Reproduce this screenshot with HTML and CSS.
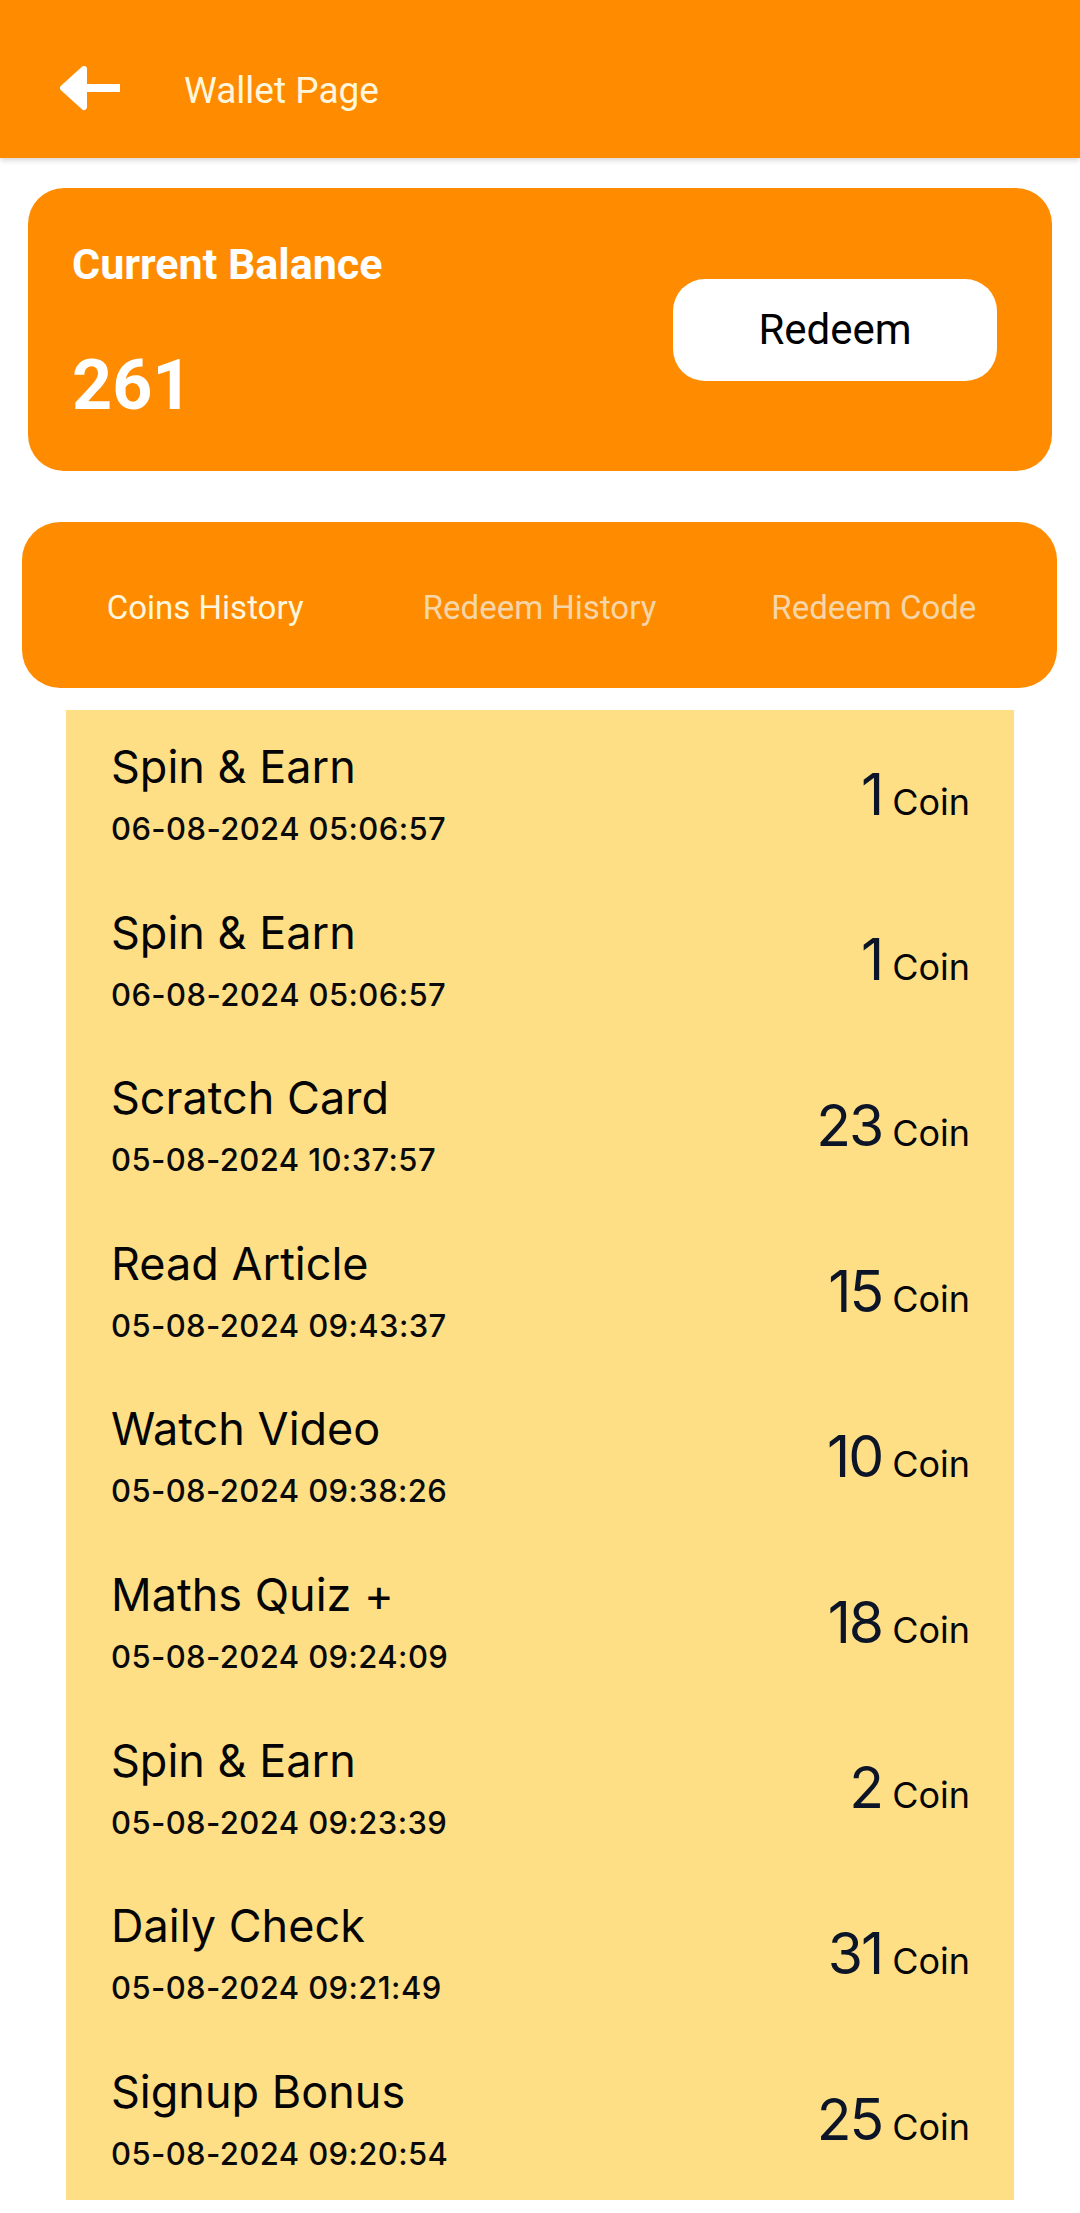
FILE: index.html
```html
<!DOCTYPE html>
<html>
<head>
<meta charset="utf-8">
<link rel="stylesheet" href="styles.css">
</head>
<body>
<header class="appbar">
  <svg class="back" width="80" height="60" viewBox="40 56 80 60">
    <path d="M84 67 L63 86 L84 105 Z" fill="#fff" stroke="#fff" stroke-width="6" stroke-linejoin="round"/>
    <line x1="84" y1="86" x2="119" y2="86" stroke="#fff" stroke-width="8" stroke-linecap="round"/>
  </svg>
  <h1 class="appbar-title">Wallet Page</h1>
</header>

<section class="balance-card">
  <div class="balance-info">
    <div class="balance-label">Current Balance</div>
    <div class="balance-value">261</div>
  </div>
  <button class="redeem-btn">Redeem</button>
</section>

<nav class="tabs">
  <div class="tab active">Coins History</div>
  <div class="tab">Redeem History</div>
  <div class="tab">Redeem Code</div>
</nav>

<ul class="history">
  <li class="row"><div class="info"><div class="title">Spin &amp; Earn</div><div class="date">06-08-2024 05:06:57</div></div><div class="amount"><span class="num">1</span><span class="unit">Coin</span></div></li>
  <li class="row"><div class="info"><div class="title">Spin &amp; Earn</div><div class="date">06-08-2024 05:06:57</div></div><div class="amount"><span class="num">1</span><span class="unit">Coin</span></div></li>
  <li class="row"><div class="info"><div class="title">Scratch Card</div><div class="date">05-08-2024 10:37:57</div></div><div class="amount"><span class="num">23</span><span class="unit">Coin</span></div></li>
  <li class="row"><div class="info"><div class="title">Read Article</div><div class="date">05-08-2024 09:43:37</div></div><div class="amount"><span class="num">15</span><span class="unit">Coin</span></div></li>
  <li class="row"><div class="info"><div class="title">Watch Video</div><div class="date">05-08-2024 09:38:26</div></div><div class="amount"><span class="num">10</span><span class="unit">Coin</span></div></li>
  <li class="row"><div class="info"><div class="title">Maths Quiz +</div><div class="date">05-08-2024 09:24:09</div></div><div class="amount"><span class="num">18</span><span class="unit">Coin</span></div></li>
  <li class="row"><div class="info"><div class="title">Spin &amp; Earn</div><div class="date">05-08-2024 09:23:39</div></div><div class="amount"><span class="num">2</span><span class="unit">Coin</span></div></li>
  <li class="row"><div class="info"><div class="title">Daily Check</div><div class="date">05-08-2024 09:21:49</div></div><div class="amount"><span class="num">31</span><span class="unit">Coin</span></div></li>
  <li class="row"><div class="info"><div class="title">Signup Bonus</div><div class="date">05-08-2024 09:20:54</div></div><div class="amount"><span class="num">25</span><span class="unit">Coin</span></div></li>
</ul>
</body>
</html>
```

FILE: styles.css
```css
* { box-sizing: border-box; }
html, body {
  margin: 0;
  padding: 0;
  background: #ffffff;
}
body {
  width: 1080px;
  height: 2213px;
  overflow: hidden;
  font-family: Roboto, "Liberation Sans", sans-serif;
}

.appbar {
  height: 158px;
  background: #ff8c00;
  display: flex;
  align-items: center;
  padding-top: 18px;
  padding-left: 40px;
  box-shadow: 0 2px 6px rgba(0, 0, 0, 0.18);
  position: relative;
  z-index: 1;
}
.back {
  display: block;
  flex: none;
}
.appbar-title {
  margin: 6px 0 0 64px;
  font-size: 37px;
  font-weight: 400;
  color: #fff6de;
  line-height: 44px;
}

.balance-card {
  margin: 30px 28px 0 28px;
  height: 283px;
  background: #ff8c00;
  border-radius: 36px;
  display: flex;
  align-items: center;
  justify-content: space-between;
  padding: 0 55px 0 44px;
}
.balance-info {
  display: flex;
  flex-direction: column;
  padding-top: 4px;
}
.balance-label {
  font-size: 43px;
  font-weight: 700;
  line-height: 50px;
  color: #ffffff;
}
.balance-value {
  margin-top: 56px;
  font-size: 70px;
  font-weight: 700;
  line-height: 80px;
  color: #ffffff;
}
.redeem-btn {
  width: 324px;
  height: 102px;
  border: none;
  border-radius: 32px;
  background: #ffffff;
  font-family: Roboto, "Liberation Sans", sans-serif;
  font-size: 42px;
  color: #000000;
  padding: 0;
}

.tabs {
  margin: 51px 23px 0 22px;
  height: 166px;
  background: #ff8c00;
  border-radius: 38px;
  display: flex;
  align-items: center;
  padding: 4px 16px 0 16px;
}
.tab {
  flex: 1;
  text-align: center;
  font-size: 33px;
  color: #f6d6a9;
}
.tab.active {
  color: #fff6de;
}

.history {
  list-style: none;
  margin: 22px 66px 0 66px;
  padding: 0;
  background: #fedf85;
}
.row {
  height: 165.6px;
  display: flex;
  align-items: center;
  justify-content: space-between;
  padding: 0 44px 0 45px;
}
.info {
  align-self: flex-start;
  padding-top: 29px;
  display: flex;
  flex-direction: column;
}
.title {
  font-family: Inter, "Noto Sans", sans-serif;
  font-size: 45px;
  font-weight: 400;
  line-height: 56px;
  color: #050505;
}
.date {
  margin-top: 14px;
  font-family: Inter, "Noto Sans", sans-serif;
  font-size: 31px;
  font-weight: 500;
  line-height: 40px;
  color: #0a0a0a;
  letter-spacing: 0.4px;
}
.amount {
  display: flex;
  align-items: baseline;
  gap: 10px;
  margin-top: 4px;
}
.num {
  font-family: Inter, "Noto Sans", sans-serif;
  font-size: 57px;
  font-weight: 400;
  line-height: 70px;
  color: #0c1527;
  letter-spacing: -2px;
}
.unit {
  font-family: Inter, "Noto Sans", sans-serif;
  font-size: 36px;
  font-weight: 400;
  color: #050505;
}
```
